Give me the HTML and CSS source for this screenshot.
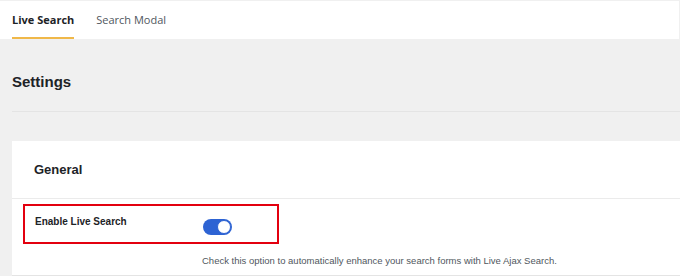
FILE: index.html
```html
<!DOCTYPE html>
<html lang="en">
<head>
  <meta charset="UTF-8">
  <title>Live Search Settings</title>
  <link rel="stylesheet" href="styles.css">
</head>
<body>
  <nav class="tabs">
    <a class="tab active" href="#">Live Search</a>
    <a class="tab" href="#">Search Modal</a>
  </nav>

  <div class="wrap">
    <h1 class="page-title">Settings</h1>

    <div class="card">
      <h2 class="card-title">General</h2>
      <div class="card-body">
        <div class="field highlight">
          <label class="field-label">Enable Live Search</label>
          <span class="toggle on"><span class="knob"></span></span>
        </div>
        <p class="help">Check this option to automatically enhance your search forms with Live Ajax Search.</p>
      </div>
    </div>
  </div>
</body>
</html>
```

FILE: styles.css
```css
body {
  margin: 0;
  background: #f0f0f0;
  font-family: "Liberation Sans", Arial, sans-serif;
  color: #1d2327;
}

.tabs {
  display: flex;
  gap: 22px;
  margin: 1px 1px 0 0;
  padding: 0 12px;
  height: 38px;
  background: #fff;
}

.tab {
  display: flex;
  align-items: center;
  padding-top: 1px;
  font-family: "Open Sans", sans-serif;
  font-size: 11px;
  color: #50575e;
  text-decoration: none;
  border-bottom: 2px solid transparent;
}

.tab.active {
  font-weight: bold;
  color: #1d2327;
  border-bottom-color: #f0b849;
}

.wrap {
  padding-left: 12px;
}

.page-title {
  margin: 0;
  padding: 33px 0 20px;
  font-size: 15px;
  line-height: 19px;
  border-bottom: 1px solid #e4e4e4;
}

.card {
  margin-top: 29px;
  background: #fff;
  border-bottom: 1px solid #e4e4e4;
}

.card-title {
  margin: 0;
  padding: 20px 22px 20px;
  font-size: 13px;
  line-height: 17px;
  border-bottom: 1px solid #ebebeb;
}

.card-body {
  padding: 5px 0 9px 11px;
}

.field {
  display: flex;
  align-items: center;
  box-sizing: border-box;
  width: 256px;
  height: 40px;
  padding-left: 10px;
}

.highlight {
  border: 2px solid #e3000f;
}

.field-label {
  width: 168px;
  font-size: 10px;
  font-weight: bold;
  margin-top: -5px;
}

.toggle {
  position: relative;
  width: 29px;
  height: 16px;
  border-radius: 9px;
  background: #2d63d3;
  margin-top: 5px;
}

.knob {
  position: absolute;
  top: 1px;
  right: 1px;
  width: 14px;
  height: 14px;
  border-radius: 50%;
  background: #fff;
  box-sizing: border-box;
  border: 1px solid #2d63d3;
}

.help {
  margin: 11px 0 0 179px;
  font-size: 9.5px;
  color: #50575e;
}
```
